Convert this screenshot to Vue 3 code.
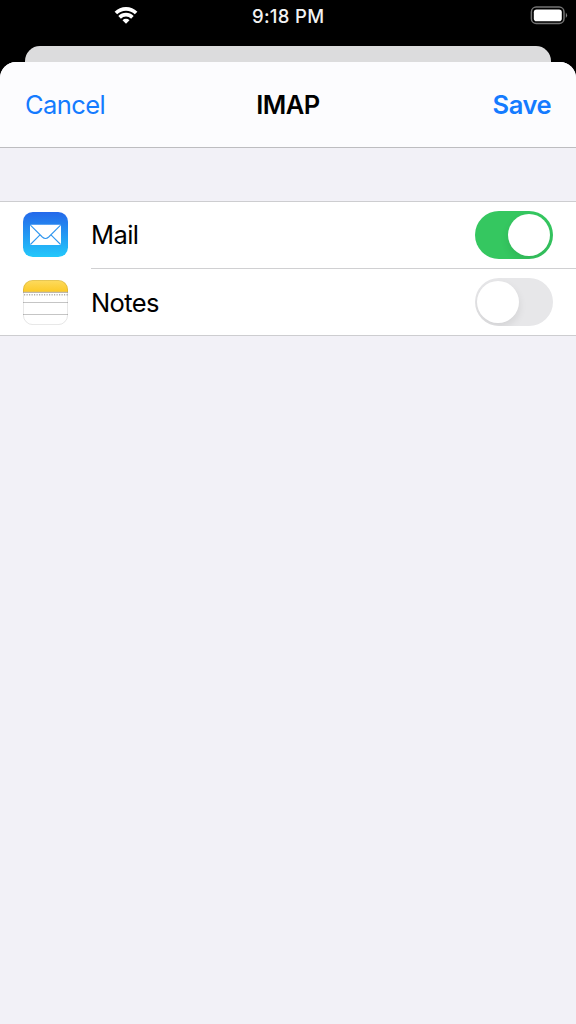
<script setup>
import { ref } from 'vue'

const accounts = ref([
  { name: 'Mail', on: true },
  { name: 'Notes', on: false },
])
</script>

<template>
  <div class="phone">
    <header class="status">
      <svg class="wifi" width="24" height="18" viewBox="0 0 24 18">
        <g fill="none" stroke="#fff" stroke-width="3.7">
          <path d="M1.9 7 A14.4 14.4 0 0 1 22.1 7" />
          <path d="M5.6 11.3 A9.2 9.2 0 0 1 18.4 11.3" />
        </g>
        <path d="M8.5 14.2 A4.9 4.9 0 0 1 15.5 14.2 L12 17.8 Z" fill="#fff" />
      </svg>
      <span class="time">9:18 PM</span>
      <svg class="battery" width="38" height="20" viewBox="0 0 38 20">
        <rect x="1.4" y="1.1" width="32.6" height="16.4" rx="4.8" fill="none" stroke="#737373" stroke-width="1.5" />
        <rect x="3.8" y="3.4" width="28" height="11.8" rx="2.8" fill="#fff" />
        <path d="M35.8 6.4 Q38.4 9.2 35.8 12 Z" fill="#858585" />
      </svg>
    </header>
    <div class="back-sheet"></div>
    <main class="sheet">
      <nav class="bar">
        <span class="cancel">Cancel</span>
        <span class="title">IMAP</span>
        <span class="save">Save</span>
      </nav>
      <section class="list">
        <div v-for="item in accounts" :key="item.name" class="row">
          <svg v-if="item.name === 'Mail'" class="icon" viewBox="0 0 45 45">
            <defs>
              <linearGradient id="sky" x1="0" y1="0" x2="0" y2="1">
                <stop offset="0" stop-color="#2468ea" />
                <stop offset="1" stop-color="#23c8fb" />
              </linearGradient>
            </defs>
            <rect width="45" height="45" rx="9.8" fill="url(#sky)" />
            <rect x="7" y="12.7" width="31" height="20.2" rx="1" fill="#fff" />
            <g fill="none" stroke="#3197ef" stroke-width="1.1">
              <path d="M7.4 13.1 L19.3 25 Q22.5 28 25.7 25 L37.6 13.1" />
              <path d="M7.4 32.5 L17 22.8 M37.6 32.5 L28 22.8" />
            </g>
          </svg>
          <svg v-else class="icon" viewBox="0 0 45 45">
            <defs>
              <linearGradient id="gold" x1="0" y1="0" x2="0" y2="1">
                <stop offset="0" stop-color="#fddb60" />
                <stop offset="1" stop-color="#fcca27" />
              </linearGradient>
              <clipPath id="pad"><rect width="45" height="45" rx="9.8" /></clipPath>
            </defs>
            <g clip-path="url(#pad)">
              <rect width="45" height="45" fill="#fff" />
              <rect width="45" height="12" fill="url(#gold)" />
              <path d="M0 12.4 H45" stroke="#bdb8ae" stroke-width="1.1" />
              <path d="M1 14.8 H45" stroke="#b0b0b0" stroke-width="1.5" stroke-dasharray="1.2 1.3" />
              <path d="M0 22.5 H45 M0 34.5 H45" stroke="#c5c5c5" stroke-width="1" />
            </g>
            <rect x=".4" y=".4" width="44.2" height="44.2" rx="9.4" fill="none" stroke="#000" stroke-opacity=".13" stroke-width=".8" />
          </svg>
          <div class="cell">
            <span class="label">{{ item.name }}</span>
            <button
              class="switch"
              :class="{ on: item.on }"
              role="switch"
              :aria-checked="item.on"
              :aria-label="item.name"
              @click="item.on = !item.on"
            >
              <span class="knob"></span>
            </button>
          </div>
        </div>
      </section>
    </main>
  </div>
</template>

<style>
body {
  margin: 0;
  background: #000;
}
</style>

<style scoped>
.phone {
  box-sizing: border-box;
  width: 576px;
  height: 1024px;
  overflow: hidden;
  display: flex;
  flex-direction: column;
  background: #000;
  color: #000;
  font-family: Inter, "Liberation Sans", sans-serif;
}
.status {
  flex: none;
  height: 46px;
  box-sizing: border-box;
  padding: 6px 8px 0 114px;
  display: grid;
  grid-template-columns: 24px 1fr 38px;
  align-items: start;
}
.wifi {
  display: block;
}
.time {
  justify-self: start;
  margin-left: 114px;
  color: #f2f2f2;
  font-size: 18.5px;
  font-weight: 500;
  line-height: 20px;
  letter-spacing: 0.3px;
  white-space: nowrap;
}
.battery {
  display: block;
}
.back-sheet {
  flex: none;
  height: 31px;
  margin: 0 25px -15.5px;
  border-radius: 15px 15px 0 0;
  background: #dcdcdd;
}
.sheet {
  flex: 1;
  position: relative;
  border-radius: 16px 16px 0 0;
  overflow: hidden;
  background: #f2f1f7;
}
.bar {
  height: 86.5px;
  box-sizing: border-box;
  padding: 1px 25px 0 25px;
  border-bottom: 1px solid #bdbdc0;
  background: #fcfcfe;
  display: grid;
  grid-template-columns: 1fr auto 1fr;
  align-items: center;
  font-size: 25.5px;
  line-height: 32px;
}
.cancel {
  color: #147bff;
  letter-spacing: -0.6px;
}
.title {
  font-weight: 600;
  letter-spacing: -0.5px;
}
.save {
  justify-self: end;
  color: #147bff;
  font-weight: 600;
  letter-spacing: -0.5px;
}
.list {
  margin-top: 53px;
  border-top: 1px solid #cdcdd0;
  border-bottom: 1px solid #cdcdd0;
  background: #fff;
}
.row {
  height: 67px;
  padding-left: 23px;
  display: flex;
  align-items: center;
}
.row:last-child {
  height: 66px;
}
.icon {
  flex: none;
  width: 45px;
  height: 45px;
  display: block;
}
.row:first-child .icon {
  margin-bottom: 2px;
}
.cell {
  flex: 1;
  height: 100%;
  box-sizing: border-box;
  margin-left: 23px;
  padding-right: 23px;
  display: flex;
  align-items: center;
  justify-content: space-between;
}
.row:not(:last-child) .cell {
  border-bottom: 1px solid #d0d0d2;
}
.label {
  font-size: 25.5px;
  line-height: 32px;
  letter-spacing: -0.6px;
}
.row:last-child .label {
  padding-top: 2px;
}
.switch {
  flex: none;
  width: 78.5px;
  height: 47.5px;
  padding: 3px;
  border: 0;
  border-radius: 24px;
  overflow: hidden;
  background: #e7e7e9;
  display: flex;
  align-items: center;
}
.switch:not(.on) {
  padding-left: 2.5px;
}
.switch.on {
  justify-content: flex-end;
  background: #35c760;
}
.knob {
  width: 42px;
  height: 42px;
  border-radius: 50%;
  background: #fff;
  box-shadow: 0 4px 9px rgba(0, 0, 0, 0.09);
}
</style>
